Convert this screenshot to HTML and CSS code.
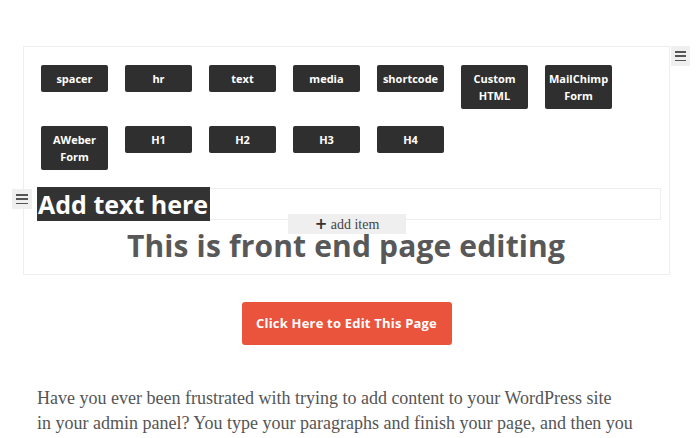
FILE: index.html
```html
<!DOCTYPE html>
<html>
<head>
<meta charset="utf-8">
<link rel="stylesheet" href="styles.css">
</head>
<body>
<div class="page">
  <div class="editor">
    <button class="handle handle-right" aria-label="menu"><span></span><span></span><span></span></button>
    <div class="tools">
      <span class="tool">spacer</span>
      <span class="tool">hr</span>
      <span class="tool">text</span>
      <span class="tool">media</span>
      <span class="tool">shortcode</span>
      <span class="tool">Custom HTML</span>
      <span class="tool">MailChimp Form</span>
      <span class="tool">AWeber Form</span>
      <span class="tool">H1</span>
      <span class="tool">H2</span>
      <span class="tool">H3</span>
      <span class="tool">H4</span>
    </div>
    <div class="block">
      <button class="handle handle-left" aria-label="menu"><span></span><span></span><span></span></button>
      <span class="block-text">Add text here</span>
      <div class="add-item"><b>+</b> add item</div>
    </div>
    <h1 class="title">This is front end page editing</h1>
  </div>
  <div class="cta-wrap"><a class="cta" href="#">Click Here to Edit This Page</a></div>
  <p class="intro">Have you ever been frustrated with trying to add content to your WordPress site<br>in your admin panel? You type your paragraphs and finish your page, and then you</p>
</div>
</body>
</html>
```
FILE: styles.css
```css
html, body { margin: 0; padding: 0; background: #fff; }
body { font-family: "Open Sans", sans-serif; width: 700px; height: 438px; overflow: hidden; }
.page { padding: 46px 0 0 23px; }
.editor {
  position: relative;
  width: 647px;
  box-sizing: border-box;
  border: 1px solid #eeeeee;
  padding: 18px 8px 10px 13px;
}
.handle {
  position: absolute;
  width: 19px;
  height: 20px;
  padding: 5px 4px;
  box-sizing: border-box;
  border: 0;
  background: #efefef;
  display: flex;
  flex-direction: column;
  justify-content: space-between;
}
.handle span { display: block; height: 1.5px; background: #555; }
.handle-right { left: 100%; top: -1px; margin-left: 2px; }
.handle-left { left: -26px; top: 0; width: 20px; }
.tools {
  display: flex;
  flex-wrap: wrap;
  align-items: flex-start;
  column-gap: 17px;
  row-gap: 17px;
  padding-left: 4px;
  width: 600px;
}
.tool {
  width: 67px;
  box-sizing: border-box;
  padding: 5px 4px;
  background: #2f2f2f;
  color: #fff;
  font-weight: 700;
  font-size: 11px;
  line-height: 17px;
  text-align: center;
  border-radius: 2px;
}
.block {
  position: relative;
  margin-top: 18px;
  height: 32px;
  box-sizing: border-box;
  border: 1px solid #eeeeee;
}
.block-text {
  position: relative;
  display: inline-block;
  top: -2px;
  left: -1px;
  background: #333;
  color: #fff;
  font-weight: 700;
  font-size: 25px;
  line-height: 34px;
  padding: 0 2px 0 1px;
}
.add-item {
  position: absolute;
  left: 250px;
  top: 25px;
  width: 118px;
  height: 20px;
  background: #efefef;
  color: #444;
  font-family: "Liberation Serif", serif;
  font-size: 14px;
  line-height: 21px;
  text-align: center;
  z-index: 1;
}
.add-item b { font-family: "DejaVu Sans", sans-serif; font-size: 15px; color: #333; }
.title {
  margin: 8px 0 0;
  text-align: center;
  font-size: 30px;
  letter-spacing: 0.15px;
  line-height: 36px;
  font-weight: 700;
  color: #585858;
  padding-right: 6px;
}
.cta-wrap { width: 647px; display: flex; justify-content: center; margin-top: 27px; }
.cta {
  display: block;
  width: 210px;
  height: 43px;
  line-height: 43px;
  background: #ea533c;
  color: #fff;
  text-align: center;
  text-decoration: none;
  font-weight: 700;
  font-size: 13px;
  letter-spacing: 0.2px;
  border-radius: 3px;
}
.intro {
  margin: 41px 0 0 14px;
  font-family: "Liberation Serif", serif;
  font-size: 18px;
  line-height: 25px;
  color: #555;
}
```
